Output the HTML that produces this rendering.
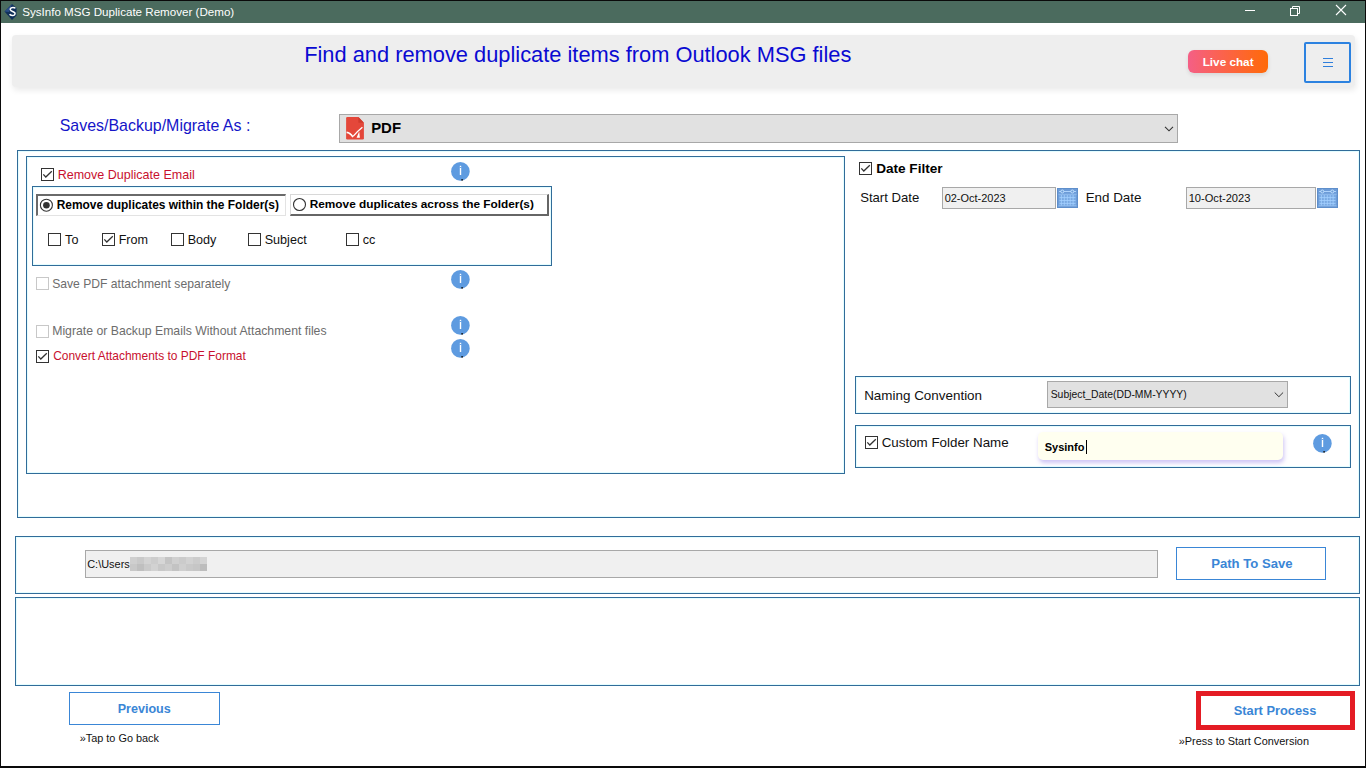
<!DOCTYPE html>
<html><head><meta charset="utf-8">
<style>
*{margin:0;padding:0;box-sizing:border-box}
html,body{width:1366px;height:768px;overflow:hidden;background:#fff;font-family:"Liberation Sans",sans-serif;position:relative}
.a{position:absolute}
.bx{position:absolute;border:1px solid #316c99;box-shadow:inset 0 0 0 1px #e4fdff}
.t{position:absolute;white-space:nowrap;line-height:1}
</style></head><body>
<div class="a" style="left:0;top:0;width:1366px;height:768px;border:1px solid #0a0a0a;border-bottom-width:2px"></div>
<div class="a" style="left:1px;top:1px;width:1364px;height:22px;background:#4b6b5e"></div>
<svg class="a" style="left:3px;top:3px" width="16" height="18" viewBox="0 0 16 18"><path d="M9 1 L13.5 5 L13.5 12.5 L9 17 L1.5 8.5 Z" fill="#10305a"/><path d="M9 1 L1.5 8.5 L6 9 Z" fill="#2f5592" opacity="0.8"/><path d="M12.3 5.3 C11.6 4.2 8.2 4 7.4 5.6 C6.6 7.4 8.8 8.2 10.2 8.7 C11.9 9.3 12.6 10.3 11.6 11.7 C10.6 12.9 7.6 12.7 6.6 11.3" fill="none" stroke="#fff" stroke-width="1.5"/></svg>
<div class="a" style="left:1245px;top:10px;width:10px;height:1px;background:#fff"></div>
<svg class="a" style="left:1289px;top:4px" width="13" height="13" viewBox="0 0 13 13"><rect x="1.5" y="4.5" width="7" height="7" fill="none" stroke="#fff" stroke-width="1"/><path d="M3.5 4.5 V2.5 H10.5 V9.5 H8.5" fill="none" stroke="#fff" stroke-width="1"/></svg>
<svg class="a" style="left:1335px;top:4px" width="12" height="12" viewBox="0 0 12 12"><path d="M1 1 L11 11 M11 1 L1 11" stroke="#fff" stroke-width="1.1"/></svg>
<div class="a" style="left:12px;top:35px;width:1343px;height:52px;background:#eeeeee;border-radius:4px;box-shadow:1px 3px 6px rgba(0,0,0,0.09)"></div>
<div class="a" style="left:1188px;top:50px;width:80px;height:23px;border-radius:6px;background:linear-gradient(90deg,#f45f86 0%,#fb6250 40%,#ff6a08 100%);box-shadow:0 2px 4px rgba(0,0,0,0.10)"></div>
<div class="a" style="left:1304px;top:42px;width:47px;height:41px;border:2px solid #2c82e0;border-radius:2px"></div>
<div class="a" style="left:1323px;top:58px;width:10px;height:1px;background:#2f7fdc"></div>
<div class="a" style="left:1323px;top:62px;width:10px;height:1px;background:#2f7fdc"></div>
<div class="a" style="left:1323px;top:66px;width:10px;height:1px;background:#2f7fdc"></div>
<div class="a" style="left:339px;top:114px;width:839px;height:29px;background:#e1e1e1;border:1px solid #a8a8a8"></div>
<svg class="a" style="left:345px;top:116px" width="20" height="25" viewBox="0 0 20 25"><path d="M2.3 1.1 H13.4 L18.9 6.8 V22.3 Q18.9 23.6 17.6 23.6 H2.3 Q1.1 23.6 1.1 22.3 V2.4 Q1.1 1.1 2.3 1.1 Z" fill="#e4473a"/><path d="M13.4 1.1 L18.9 6.8 L13.4 6.8 Z" fill="#cf3a2c"/><path d="M1.6 16.4 Q5.2 16.6 8 21.2" fill="none" stroke="#fff" stroke-width="1.6"/><path d="M17.4 11.2 Q12 15.5 8.3 20.2" fill="none" stroke="#fff" stroke-width="1.3"/><path d="M11.6 21.8 L14.9 21.8 L14.2 15.4 Z" fill="#fff"/></svg>
<svg class="a" style="left:1164px;top:125px" width="12" height="8" viewBox="0 0 12 8"><path d="M1 1.8 L5 5.8 L9 1.8" fill="none" stroke="#333" stroke-width="1.1"/></svg>
<div class="bx" style="left:17px;top:150px;width:1343px;height:368px"></div>
<div class="bx" style="left:26px;top:156px;width:819px;height:318px"></div>
<div class="bx" style="left:32px;top:186px;width:520px;height:80px"></div>
<svg class="a" style="left:41px;top:168px" width="13" height="13" viewBox="0 0 13 13"><rect x="0.5" y="0.5" width="12" height="12" fill="#fff" stroke="#333" stroke-width="1"/><path d="M2.3 6.4 L4.8 9 L10.8 3.2" fill="none" stroke="#333" stroke-width="1.3"/></svg>
<div class="a" style="left:36px;top:194px;width:250px;height:22px;background:#fff;border-top:2px solid #6a6a6a;border-left:2px solid #6a6a6a;border-bottom:1px solid #e3e3e3;border-right:1px solid #e3e3e3"></div>
<svg class="a" style="left:39px;top:198px" width="15" height="15" viewBox="0 0 15 15"><circle cx="7.4" cy="7.2" r="6" fill="#fff" stroke="#333" stroke-width="1.1"/><circle cx="7.4" cy="7.2" r="3.3" fill="#333"/></svg>
<div class="a" style="left:290px;top:194px;width:259px;height:22px;background:#fff;border-top:1px solid #d8d8d8;border-left:1px solid #d8d8d8;border-bottom:2px solid #666;border-right:2px solid #666"></div>
<svg class="a" style="left:292px;top:197px" width="15" height="15" viewBox="0 0 15 15"><circle cx="7.5" cy="7.5" r="6" fill="#fff" stroke="#333" stroke-width="1.1"/></svg>
<svg class="a" style="left:48px;top:233px" width="13" height="13" viewBox="0 0 13 13"><rect x="0.5" y="0.5" width="12" height="12" fill="#fff" stroke="#333" stroke-width="1"/></svg>
<svg class="a" style="left:102px;top:233px" width="13" height="13" viewBox="0 0 13 13"><rect x="0.5" y="0.5" width="12" height="12" fill="#fff" stroke="#333" stroke-width="1"/><path d="M2.3 6.4 L4.8 9 L10.8 3.2" fill="none" stroke="#333" stroke-width="1.3"/></svg>
<svg class="a" style="left:171px;top:233px" width="13" height="13" viewBox="0 0 13 13"><rect x="0.5" y="0.5" width="12" height="12" fill="#fff" stroke="#333" stroke-width="1"/></svg>
<svg class="a" style="left:248px;top:233px" width="13" height="13" viewBox="0 0 13 13"><rect x="0.5" y="0.5" width="12" height="12" fill="#fff" stroke="#333" stroke-width="1"/></svg>
<svg class="a" style="left:346px;top:233px" width="13" height="13" viewBox="0 0 13 13"><rect x="0.5" y="0.5" width="12" height="12" fill="#fff" stroke="#333" stroke-width="1"/></svg>
<svg class="a" style="left:36px;top:277px" width="13" height="13" viewBox="0 0 13 13"><rect x="0.5" y="0.5" width="12" height="12" fill="#fff" stroke="#c8c8c8" stroke-width="1"/></svg>
<svg class="a" style="left:36px;top:325px" width="13" height="13" viewBox="0 0 13 13"><rect x="0.5" y="0.5" width="12" height="12" fill="#fff" stroke="#c8c8c8" stroke-width="1"/></svg>
<svg class="a" style="left:36px;top:350px" width="13" height="13" viewBox="0 0 13 13"><rect x="0.5" y="0.5" width="12" height="12" fill="#fff" stroke="#333" stroke-width="1"/><path d="M2.3 6.4 L4.8 9 L10.8 3.2" fill="none" stroke="#333" stroke-width="1.3"/></svg>
<svg class="a" style="left:450px;top:161px" width="21" height="21" viewBox="0 0 21 21"><circle cx="10.4" cy="10.4" r="9.3" fill="#5e9be0"/><rect x="9.8" y="4.8" width="1.4" height="9.2" fill="#fff"/><rect x="9.6" y="6.1" width="1.8" height="0.9" fill="#5e9be0"/><rect x="11.3" y="18.1" width="1.6" height="1.5" fill="#111"/></svg>
<svg class="a" style="left:450px;top:269px" width="21" height="21" viewBox="0 0 21 21"><circle cx="10.4" cy="10.4" r="9.3" fill="#5e9be0"/><rect x="9.8" y="4.8" width="1.4" height="9.2" fill="#fff"/><rect x="9.6" y="6.1" width="1.8" height="0.9" fill="#5e9be0"/><rect x="11.3" y="18.1" width="1.6" height="1.5" fill="#111"/></svg>
<svg class="a" style="left:450px;top:315px" width="21" height="21" viewBox="0 0 21 21"><circle cx="10.4" cy="10.4" r="9.3" fill="#5e9be0"/><rect x="9.8" y="4.8" width="1.4" height="9.2" fill="#fff"/><rect x="9.6" y="6.1" width="1.8" height="0.9" fill="#5e9be0"/><rect x="11.3" y="18.1" width="1.6" height="1.5" fill="#111"/></svg>
<svg class="a" style="left:450px;top:338px" width="21" height="21" viewBox="0 0 21 21"><circle cx="10.4" cy="10.4" r="9.3" fill="#5e9be0"/><rect x="9.8" y="4.8" width="1.4" height="9.2" fill="#fff"/><rect x="9.6" y="6.1" width="1.8" height="0.9" fill="#5e9be0"/><rect x="11.3" y="18.1" width="1.6" height="1.5" fill="#111"/></svg>
<svg class="a" style="left:859px;top:162px" width="13" height="13" viewBox="0 0 13 13"><rect x="0.5" y="0.5" width="12" height="12" fill="#fff" stroke="#333" stroke-width="1"/><path d="M2.3 6.4 L4.8 9 L10.8 3.2" fill="none" stroke="#333" stroke-width="1.3"/></svg>
<div class="a" style="left:942px;top:187px;width:114px;height:22px;background:#f0f0f0;border:1px solid #a8a8a8"></div>
<svg class="a" style="left:1057px;top:188px" width="21" height="20" viewBox="0 0 21 20"><rect x="0" y="0" width="21" height="20" fill="#6d9cd8"/><rect x="0.5" y="0.5" width="20" height="19" fill="none" stroke="#5f8fcb" stroke-width="1"/><rect x="2" y="7" width="17" height="10.5" fill="#79a9e2"/><line x1="2" y1="3.5" x2="19" y2="3.5" stroke="#b4d8ff" stroke-width="0.9"/><circle cx="5.3" cy="3.5" r="1.5" fill="#6d9cd8" stroke="#c8e6ff" stroke-width="0.9"/><circle cx="15.3" cy="3.5" r="1.5" fill="#6d9cd8" stroke="#c8e6ff" stroke-width="0.9"/><line x1="1.5" y1="6.3" x2="19.5" y2="6.3" stroke="#9cc6f4" stroke-width="0.8"/><line x1="1.5" y1="17.8" x2="19.5" y2="17.8" stroke="#9cc6f4" stroke-width="0.8"/><line x1="4.4" y1="7" x2="4.4" y2="17.5" stroke="#a4d0ff" stroke-width="0.8"/><line x1="7.3" y1="7" x2="7.3" y2="17.5" stroke="#a4d0ff" stroke-width="0.8"/><line x1="10.3" y1="7" x2="10.3" y2="17.5" stroke="#a4d0ff" stroke-width="0.8"/><line x1="13.2" y1="7" x2="13.2" y2="17.5" stroke="#a4d0ff" stroke-width="0.8"/><line x1="16.1" y1="7" x2="16.1" y2="17.5" stroke="#a4d0ff" stroke-width="0.8"/><line x1="2.5" y1="9.6" x2="18.5" y2="9.6" stroke="#a4d0ff" stroke-width="0.8"/><line x1="2.5" y1="12.5" x2="18.5" y2="12.5" stroke="#a4d0ff" stroke-width="0.8"/><line x1="2.5" y1="15.4" x2="18.5" y2="15.4" stroke="#a4d0ff" stroke-width="0.8"/></svg>
<div class="a" style="left:1186px;top:187px;width:130px;height:22px;background:#f0f0f0;border:1px solid #a8a8a8"></div>
<svg class="a" style="left:1317px;top:188px" width="21" height="20" viewBox="0 0 21 20"><rect x="0" y="0" width="21" height="20" fill="#6d9cd8"/><rect x="0.5" y="0.5" width="20" height="19" fill="none" stroke="#5f8fcb" stroke-width="1"/><rect x="2" y="7" width="17" height="10.5" fill="#79a9e2"/><line x1="2" y1="3.5" x2="19" y2="3.5" stroke="#b4d8ff" stroke-width="0.9"/><circle cx="5.3" cy="3.5" r="1.5" fill="#6d9cd8" stroke="#c8e6ff" stroke-width="0.9"/><circle cx="15.3" cy="3.5" r="1.5" fill="#6d9cd8" stroke="#c8e6ff" stroke-width="0.9"/><line x1="1.5" y1="6.3" x2="19.5" y2="6.3" stroke="#9cc6f4" stroke-width="0.8"/><line x1="1.5" y1="17.8" x2="19.5" y2="17.8" stroke="#9cc6f4" stroke-width="0.8"/><line x1="4.4" y1="7" x2="4.4" y2="17.5" stroke="#a4d0ff" stroke-width="0.8"/><line x1="7.3" y1="7" x2="7.3" y2="17.5" stroke="#a4d0ff" stroke-width="0.8"/><line x1="10.3" y1="7" x2="10.3" y2="17.5" stroke="#a4d0ff" stroke-width="0.8"/><line x1="13.2" y1="7" x2="13.2" y2="17.5" stroke="#a4d0ff" stroke-width="0.8"/><line x1="16.1" y1="7" x2="16.1" y2="17.5" stroke="#a4d0ff" stroke-width="0.8"/><line x1="2.5" y1="9.6" x2="18.5" y2="9.6" stroke="#a4d0ff" stroke-width="0.8"/><line x1="2.5" y1="12.5" x2="18.5" y2="12.5" stroke="#a4d0ff" stroke-width="0.8"/><line x1="2.5" y1="15.4" x2="18.5" y2="15.4" stroke="#a4d0ff" stroke-width="0.8"/></svg>
<div class="bx" style="left:855px;top:376px;width:496px;height:38px"></div>
<div class="a" style="left:1047px;top:381px;width:241px;height:27px;background:#e1e1e1;border:1px solid #a8a8a8"></div>
<svg class="a" style="left:1273px;top:391px" width="12" height="8" viewBox="0 0 12 8"><path d="M1.7 1.5 L5.9 5.7 L10.1 1.5" fill="none" stroke="#333" stroke-width="1"/></svg>
<div class="bx" style="left:855px;top:425px;width:496px;height:43px"></div>
<svg class="a" style="left:865px;top:436px" width="13" height="13" viewBox="0 0 13 13"><rect x="0.5" y="0.5" width="12" height="12" fill="#fff" stroke="#333" stroke-width="1"/><path d="M2.3 6.4 L4.8 9 L10.8 3.2" fill="none" stroke="#333" stroke-width="1.3"/></svg>
<div class="a" style="left:1038px;top:432px;width:245px;height:28px;background:#fffff0;border-radius:5px;box-shadow:1px 3px 4px rgba(125,100,225,0.38)"></div>
<div class="a" style="left:1086px;top:440px;width:1px;height:14px;background:#000"></div>
<svg class="a" style="left:1312px;top:433px" width="21" height="21" viewBox="0 0 21 21"><circle cx="10.4" cy="10.4" r="9.3" fill="#5e9be0"/><rect x="9.8" y="4.8" width="1.4" height="9.2" fill="#fff"/><rect x="9.6" y="6.1" width="1.8" height="0.9" fill="#5e9be0"/><rect x="11.3" y="18.1" width="1.6" height="1.5" fill="#111"/></svg>
<div class="bx" style="left:15px;top:536px;width:1345px;height:58px"></div>
<div class="a" style="left:85px;top:550px;width:1073px;height:28px;background:#f0f0f0;border:1px solid #a8a8a8"></div>
<div class="a" style="left:130px;top:557px;width:7px;height:7px;background:#cfcfcf"></div>
<div class="a" style="left:137px;top:557px;width:7px;height:7px;background:#c9c9c9"></div>
<div class="a" style="left:144px;top:557px;width:7px;height:7px;background:#d3d3d3"></div>
<div class="a" style="left:151px;top:557px;width:7px;height:7px;background:#cdcdcd"></div>
<div class="a" style="left:158px;top:557px;width:7px;height:7px;background:#d6d6d6"></div>
<div class="a" style="left:165px;top:557px;width:7px;height:7px;background:#c4c4c4"></div>
<div class="a" style="left:172px;top:557px;width:7px;height:7px;background:#d0d0d0"></div>
<div class="a" style="left:179px;top:557px;width:7px;height:7px;background:#cbcbcb"></div>
<div class="a" style="left:186px;top:557px;width:7px;height:7px;background:#d2d2d2"></div>
<div class="a" style="left:193px;top:557px;width:7px;height:7px;background:#cccccc"></div>
<div class="a" style="left:200px;top:557px;width:7px;height:7px;background:#d4d4d4"></div>
<div class="a" style="left:130px;top:564px;width:7px;height:7px;background:#c8c8c8"></div>
<div class="a" style="left:137px;top:564px;width:7px;height:7px;background:#bfbfbf"></div>
<div class="a" style="left:144px;top:564px;width:7px;height:7px;background:#cacaca"></div>
<div class="a" style="left:151px;top:564px;width:7px;height:7px;background:#d2d2d2"></div>
<div class="a" style="left:158px;top:564px;width:7px;height:7px;background:#c8c8c8"></div>
<div class="a" style="left:165px;top:564px;width:7px;height:7px;background:#cdcdcd"></div>
<div class="a" style="left:172px;top:564px;width:7px;height:7px;background:#c3c3c3"></div>
<div class="a" style="left:179px;top:564px;width:7px;height:7px;background:#cfcfcf"></div>
<div class="a" style="left:186px;top:564px;width:7px;height:7px;background:#c9c9c9"></div>
<div class="a" style="left:193px;top:564px;width:7px;height:7px;background:#c6c6c6"></div>
<div class="a" style="left:200px;top:564px;width:7px;height:7px;background:#bdbdbd"></div>
<div class="a" style="left:1176px;top:547px;width:150px;height:33px;border:1px solid #3a86d6"></div>
<div class="bx" style="left:15px;top:597px;width:1345px;height:89px"></div>
<div class="a" style="left:69px;top:692px;width:151px;height:33px;border:1px solid #3a86d6"></div>
<div class="a" style="left:1196px;top:691px;width:159px;height:39px;border:5px solid #e41c24"></div>
<div class="t" id="tb" style="left:22.22px;top:6.18px;font-size:11.60px;color:#ffffff">SysInfo MSG Duplicate Remover (Demo)</div>
<div class="t" id="hd" style="left:304.20px;top:44.31px;font-size:21.84px;color:#0a0ad2">Find and remove duplicate items from Outlook MSG files</div>
<div class="t" id="lc" style="left:1202.69px;top:55.96px;font-size:11.74px;color:#ffffff;font-weight:700">Live chat</div>
<div class="t" id="sv" style="left:59.70px;top:117.89px;font-size:15.96px;color:#1515c8">Saves/Backup/Migrate As :</div>
<div class="t" id="pdf" style="left:371.18px;top:121.08px;font-size:14.91px;color:#000000;font-weight:700">PDF</div>
<div class="t" id="rde" style="left:57.69px;top:169.10px;font-size:12.52px;color:#c8102e">Remove Duplicate Email</div>
<div class="t" id="rw" style="left:56.70px;top:199.69px;font-size:11.94px;color:#000000;font-weight:700">Remove duplicates within the Folder(s)</div>
<div class="t" id="ra" style="left:309.71px;top:199.28px;font-size:11.84px;color:#000000;font-weight:700">Remove duplicates across the Folder(s)</div>
<div class="t" id="to" style="left:65.10px;top:233.53px;font-size:12.60px;color:#111111">To</div>
<div class="t" id="fr" style="left:118.66px;top:233.53px;font-size:12.60px;color:#111111">From</div>
<div class="t" id="bo" style="left:187.65px;top:233.53px;font-size:12.60px;color:#111111">Body</div>
<div class="t" id="su" style="left:264.68px;top:233.53px;font-size:12.60px;color:#111111">Subject</div>
<div class="t" id="cc" style="left:362.67px;top:233.53px;font-size:12.60px;color:#111111">cc</div>
<div class="t" id="sp" style="left:52.18px;top:278.42px;font-size:12.15px;color:#6d6d6d">Save PDF attachment separately</div>
<div class="t" id="mg" style="left:52.20px;top:324.73px;font-size:12.26px;color:#6d6d6d">Migrate or Backup Emails Without Attachment files</div>
<div class="t" id="cv" style="left:53.20px;top:351.17px;font-size:11.96px;color:#c8102e">Convert Attachments to PDF Format</div>
<div class="t" id="df" style="left:876.18px;top:162.31px;font-size:13.58px;color:#000000;font-weight:700">Date Filter</div>
<div class="t" id="sd" style="left:860.18px;top:191.49px;font-size:13.13px;color:#111111">Start Date</div>
<div class="t" id="d1" style="left:944.68px;top:193.41px;font-size:10.97px;color:#111111">02-Oct-2023</div>
<div class="t" id="ed" style="left:1085.65px;top:190.96px;font-size:13.40px;color:#111111">End Date</div>
<div class="t" id="d2" style="left:1188.67px;top:193.29px;font-size:11.12px;color:#111111">10-Oct-2023</div>
<div class="t" id="nc" style="left:864.16px;top:389.23px;font-size:13.43px;color:#111111">Naming Convention</div>
<div class="t" id="sdt" style="left:1050.69px;top:389.70px;font-size:10.39px;color:#111111">Subject_Date(DD-MM-YYYY)</div>
<div class="t" id="cf" style="left:881.70px;top:436.18px;font-size:13.37px;color:#111111">Custom Folder Name</div>
<div class="t" id="si" style="left:1044.70px;top:442.19px;font-size:11.00px;color:#000000;font-weight:700">Sysinfo</div>
<div class="t" id="cu" style="left:87.18px;top:559.02px;font-size:10.96px;color:#111111">C:\Users</div>
<div class="t" id="pts" style="left:1211.17px;top:556.78px;font-size:13.13px;color:#3a86d6;font-weight:700">Path To Save</div>
<div class="t" id="pv" style="left:117.66px;top:702.94px;font-size:12.59px;color:#3a86d6;font-weight:700">Previous</div>
<div class="t" id="tg" style="left:79.68px;top:733.38px;font-size:10.90px;color:#111111">»Tap to Go back</div>
<div class="t" id="sp2" style="left:1233.69px;top:704.95px;font-size:12.82px;color:#3a86d6;font-weight:700">Start Process</div>
<div class="t" id="pc" style="left:1178.68px;top:736.25px;font-size:10.92px;color:#111111">»Press to Start Conversion</div>
</body></html>
